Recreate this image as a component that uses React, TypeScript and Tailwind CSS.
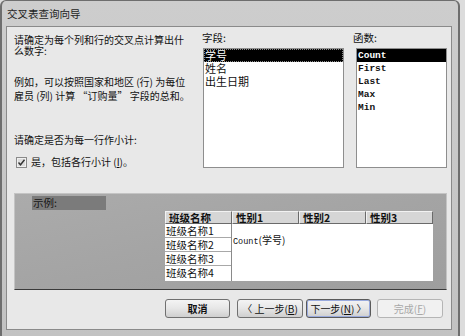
const CJK = "font-['Noto_Sans_CJK_SC','Noto_Sans',sans-serif]";
const MONO = "font-['Liberation_Mono','Noto_Sans_CJK_SC',monospace]";

function Btn({ children, w, disabled, def }: { children: React.ReactNode; w: string; disabled?: boolean; def?: boolean }) {
  const base = "h-[19px] rounded-[3px] flex items-center justify-center text-[10px] leading-none";
  if (disabled)
    return <div className={`${base} ${w} border border-[#b5b5b5] bg-[#f1f1f1] text-[#a8a8a8]`}>{children}</div>;
  return (
    <div
      className={`${base} ${w} border ${def ? "border-[#5a5a5a] shadow-[inset_0_0_0_1px_#9ad]" : "border-[#707070]"} bg-gradient-to-b from-[#f4f4f4] via-[#e6e6e6] to-[#cfcfcf] text-[#111]`}
    >
      {children}
    </div>
  );
}

import React from "react";

export default function App() {
  return (
    <div className="w-[465px] h-[336px] bg-[#dcdcdc] overflow-hidden">
      <div
        className={`w-[460px] h-[336px] bg-gradient-to-b from-[#cdcdcd] to-[#c2c2c2] border-l-2 border-r-2 border-t border-[#6e6e6e] rounded-t-[6px] flex flex-col ${CJK} text-[#111]`}
      >
        {/* title bar */}
        <div className="h-[25px] flex items-center pl-[5px] text-[10.5px] text-[#1e1e1e]">交叉表查询向导</div>

        {/* client */}
        <div className="ml-[4px] mr-[6px] h-[304px] bg-[#e8e8e8] border border-[#8a8a8a] flex flex-col">
          {/* top row */}
          <div className="flex pl-[7px] pt-[5px]">
            <div className="w-[176px] pt-[2px] text-[10px]">
              <div className="leading-[11px]">
                请确定为每个列和行的交叉点计算出什
                <br />
                么数字:
              </div>
              <div className="mt-[19px] leading-[14px]">
                例如，可以按照国家和地区 (行) 为每位
                <br />
                雇员 (列) 计算 “订购量” 字段的总和。
              </div>
              <div className="mt-[31px] leading-[12px]">请确定是否为每一行作小计:</div>
              <div className="mt-[10px] h-[12px] flex items-center ml-[2px]">
                <svg width="11" height="11" viewBox="0 0 11 11">
                  <rect x="0.5" y="0.5" width="10" height="10" fill="#f0f0f0" stroke="#8a8a8a" />
                  <rect x="2" y="2" width="7" height="7" fill="#dcdcdc" />
                  <path d="M2.5 5.5 L4.5 7.8 L8.5 2.8" fill="none" stroke="#333" strokeWidth="1.4" />
                </svg>
                <span className="ml-[4px] leading-[12px]">
                  是，包括各行小计 (<span className="underline">I</span>)。
                </span>
              </div>
            </div>

            {/* fields */}
            <div className="ml-[12px] w-[142px]">
              <div className="h-[12px] leading-[12px] text-[10.5px]">字段:</div>
              <div className="mt-[4px] ml-[1px] w-[141px] h-[120px] bg-white border border-[#8e8e8e] text-[11px]">
                <div className="h-[13px] leading-[13px] bg-black text-white px-[1px] outline-1 outline-dotted outline-[#888] -outline-offset-1">学号</div>
                <div className="h-[13px] leading-[13px] px-[1px]">姓名</div>
                <div className="h-[13px] leading-[13px] px-[1px]">出生日期</div>
              </div>
            </div>

            {/* functions */}
            <div className="ml-[9px] w-[94px]">
              <div className="h-[12px] leading-[12px] text-[10.5px]">函数:</div>
              <div className={`mt-[4px] ml-[3px] w-[91px] h-[120px] bg-white border border-[#8e8e8e] ${MONO} text-[9.5px] font-bold`}>
                <div className="h-[13px] leading-[13px] bg-black text-white pl-[1px]">Count</div>
                <div className="h-[13px] leading-[13px] pl-[1px]">First</div>
                <div className="h-[13px] leading-[13px] pl-[1px]">Last</div>
                <div className="h-[13px] leading-[13px] pl-[1px]">Max</div>
                <div className="h-[13px] leading-[13px] pl-[1px]">Min</div>
              </div>
            </div>
          </div>

          {/* example group */}
          <div className="mt-[25px] ml-[7px] w-[433px] h-[97px] bg-gradient-to-br from-[#ababab] via-[#a4a4a4] to-[#9e9e9e] border-t border-l border-r border-[#c4c4c4] border-b border-b-[#3a3a3a] flex flex-col">
            <div className="mt-[2px] ml-[17px] w-[74px] h-[14px] bg-[#7b7b7b] text-[10.5px] leading-[14px] pl-[1px] text-[#151515]">示例:</div>
            <div className="mt-[1px] ml-[150px] w-[268px] flex flex-col">
              <div className="flex h-[13px]">
                {["班级名称", "性别1", "性别2", "性别3"].map((t) => (
                  <div
                    key={t}
                    className="w-[67px] h-[13px] bg-[#d6d6d6] border-t border-l border-[#f2f2f2] border-r border-b border-r-[#6a6a6a] border-b-[#6a6a6a] text-[10.5px] font-bold leading-[11px] pl-[3px]"
                  >
                    {t}
                  </div>
                ))}
              </div>
              <div className="flex h-[57px] bg-white">
                <div className="w-[67px] flex flex-col border-r border-[#8a8a8a]">
                  {["班级名称1", "班级名称2", "班级名称3", "班级名称4"].map((t, i) => (
                    <div
                      key={t}
                      className={`h-[14px] leading-[13px] text-[10.5px] pl-[1px] ${i < 3 ? "border-b border-[#a8a8a8]" : ""}`}
                    >
                      {t}
                    </div>
                  ))}
                </div>
                <div className="flex-1 pl-[1px] pt-[1px]">
                  <span className={`${MONO} text-[8.5px] leading-[12px]`}>Count</span>
                  <span className="text-[10px] leading-[12px]">(学号)</span>
                </div>
              </div>
            </div>
          </div>

          {/* buttons */}
          <div className="mt-[9px] ml-[158px] flex">
            <Btn w="w-[65px]">
              <span className="font-bold">取消</span>
            </Btn>
            <div className="ml-[7px]">
              <Btn w="w-[66px]">
                〈 上一步(<span className="underline">B</span>)
              </Btn>
            </div>
            <div className="ml-[3px]">
              <Btn w="w-[65px]" def>
                下一步(<span className="underline">N</span>) 〉
              </Btn>
            </div>
            <div className="ml-[6px]">
              <Btn w="w-[66px]" disabled>
                完成(<span className="underline">F</span>)
              </Btn>
            </div>
          </div>
        </div>
      </div>
    </div>
  );
}
